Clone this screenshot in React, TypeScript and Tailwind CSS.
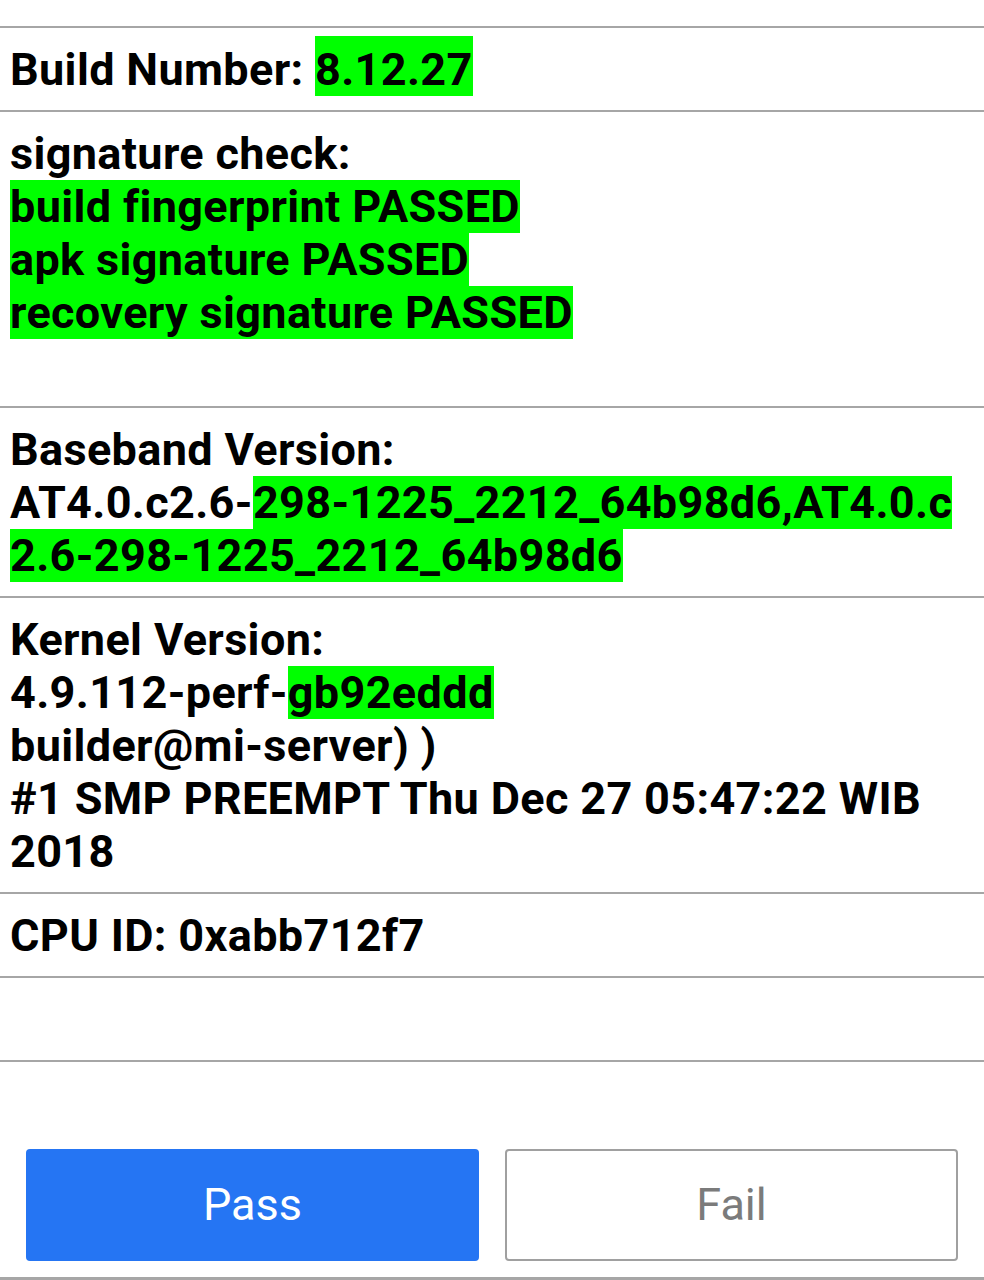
import React from "react";

const hl = "bg-[#00ff00]";

function Section({ children }: { children?: React.ReactNode }) {
  return (
    <div className="border-t-2 border-[#a6a6a6] pl-[10px] pr-[12px] pt-[15px] pb-[14px] text-[45px] leading-[53px] tracking-[0.35px] font-bold">
      {children}
    </div>
  );
}

export default function App() {
  return (
    <div className="w-[984px] h-[1280px] bg-white text-black font-['Roboto',sans-serif] overflow-hidden flex flex-col">
      <div className="h-[26px]" />
      <Section>
        Build Number: <span className={`${hl} pt-[7px]`}>8.12.27</span>
      </Section>
      <Section>
        <div>signature check:</div>
        <div>
          <span className={hl}>build fingerprint PASSED</span>
        </div>
        <div>
          <span className={hl}>apk signature PASSED</span>
        </div>
        <div>
          <span className={hl}>recovery signature PASSED</span>
        </div>
        <div>&nbsp;</div>
      </Section>
      <Section>
        <div>Baseband Version:</div>
        <div>
          AT4.0.c2.6-
          <span className={hl}>
            298-1225_2212_64b98d6,AT4.0.c
            <br />
            2.6-298-1225_2212_64b98d6
          </span>
        </div>
      </Section>
      <Section>
        <div>Kernel Version:</div>
        <div>
          4.9.112-perf-<span className={hl}>gb92eddd</span>
        </div>
        <div>builder@mi-server) )</div>
        <div>#1 SMP PREEMPT Thu Dec 27 05:47:22 WIB</div>
        <div>2018</div>
      </Section>
      <Section>CPU ID: 0xabb712f7</Section>
      <Section>&nbsp;</Section>
      <div className="border-t-2 border-[#a6a6a6] flex-1 flex flex-col">
        <div className="flex gap-[26px] px-[26px] pt-[87px]">
          <button className="w-[453px] h-[112px] rounded-[4px] bg-[#2575f3] text-white text-[45px] font-normal">
            Pass
          </button>
          <button className="w-[453px] h-[112px] rounded-[4px] border-2 border-[#a0a0a0] bg-white text-[#7b7b7b] text-[45px] font-normal">
            Fail
          </button>
        </div>
        <div className="mt-auto h-[3px] bg-[#a6a6a6]" />
      </div>
    </div>
  );
}
